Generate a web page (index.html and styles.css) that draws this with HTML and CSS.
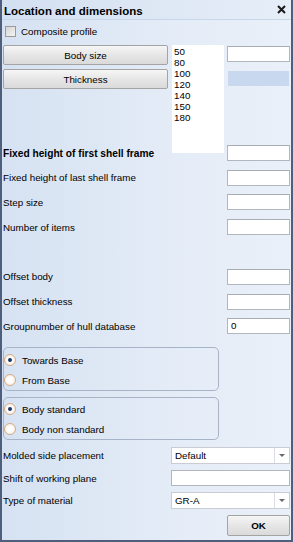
FILE: index.html
```html
<!DOCTYPE html>
<html>
<head>
<meta charset="utf-8">
<link rel="stylesheet" href="styles.css">
</head>
<body>
<div class="window">
  <div class="titlebar">
    <span class="title">Location and dimensions</span>
    <svg class="close" width="9" height="9" viewBox="0 0 9 9"><path d="M1 1L8 8M8 1L1 8" stroke="#1a1a1a" stroke-width="2"/></svg>
  </div>
  <div class="content">
    <div class="check-row"><span class="checkbox"></span><span>Composite profile</span></div>
    <div class="top-grid">
      <div class="btn b1">Body size</div>
      <div class="listbox">
        <div>50</div><div>80</div><div>100</div><div>120</div><div>140</div><div>150</div><div>180</div>
      </div>
      <div class="tb t1"></div>
      <div class="btn b2">Thickness</div>
      <div class="tb-disabled"></div>
      <span class="label bold l4">Fixed height of first shell frame</span>
      <div class="tb t4"></div>
    </div>
    <div class="field"><span class="label">Fixed height of last shell frame</span><div class="tb"></div></div>
    <div class="field"><span class="label">Step size</span><div class="tb"></div></div>
    <div class="field"><span class="label">Number of items</span><div class="tb"></div></div>
    <div class="field spacer"><span class="label">Offset body</span><div class="tb"></div></div>
    <div class="field"><span class="label">Offset thickness</span><div class="tb"></div></div>
    <div class="field"><span class="label">Groupnumber of hull database</span><div class="tb">0</div></div>
    <div class="group g1">
      <div class="radio-row"><span class="radio checked"></span><span>Towards Base</span></div>
      <div class="radio-row"><span class="radio"></span><span>From Base</span></div>
    </div>
    <div class="group g2">
      <div class="radio-row"><span class="radio checked"></span><span>Body standard</span></div>
      <div class="radio-row"><span class="radio"></span><span>Body non standard</span></div>
    </div>
    <div class="wfield f1"><span class="label">Molded side placement</span><div class="select"><span class="sel-text">Default</span><span class="arrow"></span></div></div>
    <div class="wfield f2"><span class="label">Shift of working plane</span><div class="wide-tb"></div></div>
    <div class="wfield f3"><span class="label">Type of material</span><div class="select"><span class="sel-text">GR-A</span><span class="arrow"></span></div></div>
    <div class="footer"><div class="btn ok">OK</div></div>
  </div>
</div>
</body>
</html>
```

FILE: styles.css
```css
html, body {
  margin: 0;
  padding: 0;
}
body {
  font-family: "Liberation Sans", Arial, sans-serif;
  font-size: 9.8px;
  color: #000;
}
.window {
  width: 293px;
  height: 542px;
  box-sizing: border-box;
  border-left: 2px solid #4f5e7b;
  border-right: 2px solid #4f5e7b;
  border-bottom: 2px solid #4f5e7b;
  background: linear-gradient(to right, #d6e2f2, #e4ecf7 60%, #eaf0f9);
  display: flex;
  flex-direction: column;
  overflow: hidden;
}
.titlebar {
  height: 20px;
  box-sizing: border-box;
  display: flex;
  align-items: center;
  justify-content: space-between;
  padding: 0 4px 0 2px;
  background: linear-gradient(to right, #d3e0f1, #dfe8f5 60%, #e6eef8);
  border-bottom: 1px solid #c8d6ea;
}
.title {
  font-weight: bold;
  font-size: 11.5px;
  padding-top: 2px;
}
.close {
  margin-right: 1px;
}
.content {
  padding: 0 1px;
  display: flex;
  flex-direction: column;
}
.check-row {
  display: flex;
  align-items: center;
  height: 11px;
  margin-top: 6px;
  margin-left: 2px;
}
.checkbox {
  width: 11px;
  height: 11px;
  box-sizing: border-box;
  border: 1px solid #9a9a9a;
  background: linear-gradient(135deg, #d4d4d4, #f4f4f4);
  margin-right: 5px;
}
.top-grid {
  margin-top: 8px;
  display: grid;
  grid-template-columns: 169px 55px 63px;
  grid-template-rows: 20px 20px 48px 16px;
  row-gap: 4px;
  column-gap: 0;
}
.btn {
  box-sizing: border-box;
  border: 1px solid #a4a4a4;
  border-radius: 2px;
  background: linear-gradient(#f6f6f6, #e6e6e6 50%, #dadada);
  display: flex;
  align-items: center;
  justify-content: center;
}
.b1 { grid-column: 1; grid-row: 1; width: 165px; }
.b2 { grid-column: 1; grid-row: 2; width: 165px; }
.listbox {
  grid-column: 2;
  grid-row: 1 / 5;
  width: 52px;
  height: 108px;
  background: #fff;
  padding: 1px 0 0 2px;
  box-sizing: border-box;
  line-height: 11px;
}
.tb {
  box-sizing: border-box;
  width: 63px;
  height: 16px;
  background: #fff;
  border: 1px solid #b2b6be;
  border-top-color: #a8acb4;
  padding-left: 3px;
  line-height: 14px;
}
.t1 { grid-column: 3; grid-row: 1; margin-top: 1px; }
.t4 { grid-column: 3; grid-row: 4; }
.tb-disabled {
  grid-column: 3;
  grid-row: 2;
  margin-left: 1px;
  margin-top: 2px;
  width: 61px;
  height: 15px;
  background: #c8d9ef;
}
.label {
  white-space: nowrap;
}
.bold { font-weight: bold; font-size: 10.2px; }
.l4 {
  grid-column: 1 / 3;
  grid-row: 4;
  align-self: center;
}
.field {
  display: flex;
  justify-content: space-between;
  align-items: center;
  height: 16px;
  margin-top: 8.7px;
}
.field.spacer {
  margin-top: 33.9px;
}
.group {
  width: 216px;
  box-sizing: border-box;
  border: 1px solid #a7b4c8;
  border-radius: 5px;
  display: flex;
  flex-direction: column;
  padding: 0;
}
.g1 { margin-top: 13px; height: 44px; padding-top: 6px; gap: 8px; }
.g2 { margin-top: 6px; height: 43px; padding-top: 5px; gap: 8px; }
.radio-row {
  display: flex;
  align-items: center;
  height: 12px;
}
.radio {
  width: 12px;
  height: 12px;
  box-sizing: border-box;
  border-radius: 50%;
  border: 1px solid #d7aa82;
  background: radial-gradient(circle at 50% 50%, #ffffff 30%, #f3e6da 100%);
  margin-right: 6px;
  display: flex;
  align-items: center;
  justify-content: center;
}
.radio.checked::after {
  content: "";
  width: 4px;
  height: 4px;
  border-radius: 50%;
  background: #1d3566;
}
.wfield {
  display: flex;
  justify-content: space-between;
  align-items: center;
  height: 17px;
}
.f1 { margin-top: 7px; }
.f2 { margin-top: 6px; height: 16px; }
.f3 { margin-top: 6px; }
.select {
  width: 119px;
  height: 17px;
  box-sizing: border-box;
  background: #fff;
  border: 1px solid #c9ccd2;
  display: flex;
  align-items: center;
}
.sel-text {
  flex: 1;
  padding-left: 3px;
}
.arrow {
  width: 14px;
  height: 15px;
  border-left: 1px solid #dadde2;
  display: flex;
  align-items: center;
  justify-content: center;
}
.arrow::after {
  content: "";
  border-left: 3px solid transparent;
  border-right: 3px solid transparent;
  border-top: 3px solid #6a6a6a;
}
.wide-tb {
  width: 119px;
  height: 16px;
  box-sizing: border-box;
  background: #fff;
  border: 1px solid #b2b6be;
}
.footer {
  display: flex;
  justify-content: flex-end;
  margin-top: 6px;
}
.ok {
  width: 63px;
  height: 21px;
  font-weight: bold;
}
```
